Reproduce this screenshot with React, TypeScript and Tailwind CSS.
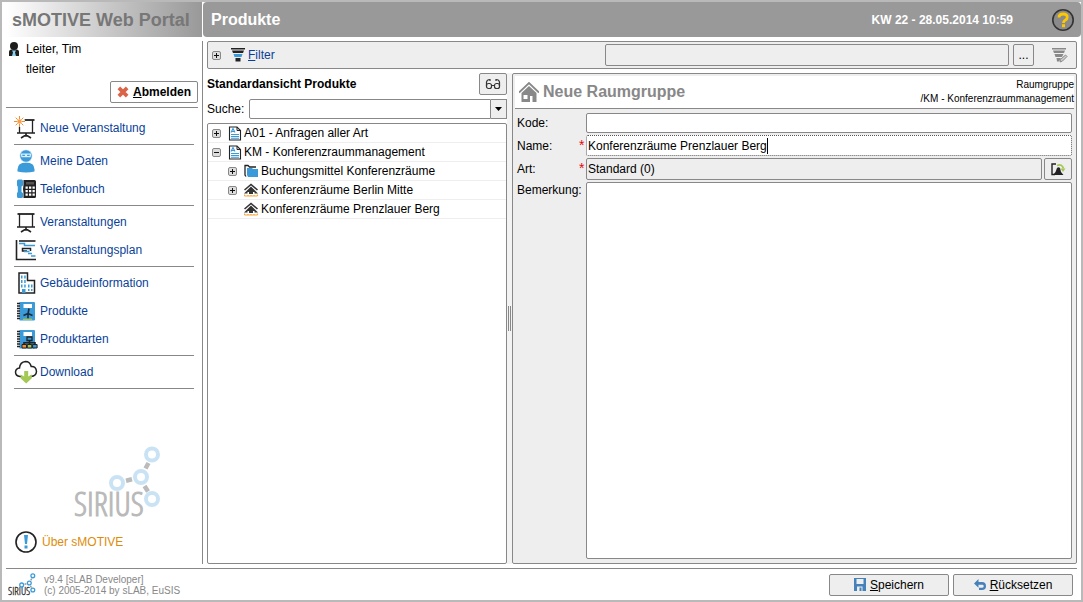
import React from 'react';

type IconProps = { className?: string };

const UserIcon = ({ className }: IconProps) => (
    <svg className={className} width="12" height="14" viewBox="0 0 12 14" aria-hidden="true">
        <circle cx="6" cy="4" r="4" fill="#1d1d1b" />
        <path d="M1 14V10Q1 7.500 3.500 7.500h5Q11 7.500 11 10v4z" fill="#1d1d1b" />
        <path d="M4 8.500h4l-1 2L8 14H4l1-3.500z" fill="#8fd0f5" />
    </svg>
);

const CrossIcon = () => (
    <svg width="12" height="12" viewBox="0 0 13 12" aria-hidden="true">
        <path d="M2 1.500l9 9M11 1.500l-9 9" stroke="#dc6446" strokeWidth="4" />
    </svg>
);

const Board = () => (
    <>
        <path d="M5.500 4v13M18.500 4v13M3 17h18" fill="none" stroke="#222" strokeWidth="1.300" />
        <path d="M3.500 4h17" stroke="#222" strokeWidth="1.800" />
        <path d="M12 17v3M7 22l3.500-2.200h3L17 22" fill="none" stroke="#222" strokeWidth="1.700" />
    </>
);

const BoardIcon = () => (
    <svg width="24" height="24" viewBox="0 0 24 24" aria-hidden="true">
        <Board />
    </svg>
);

const NewEventIcon = () => (
    <svg width="24" height="24" viewBox="0 0 24 24" aria-hidden="true">
        <Board />
        <circle cx="5.500" cy="5.500" r="5.500" fill="#fff" />
        <circle cx="5.500" cy="5.500" r="2.200" fill="#f6a04d" />
        <path d="M5.500 0v3M5.500 8v3M0 5.500h3M8 5.500h3M1.700 1.700l2 2M7.300 7.300l2 2M9.300 1.700l-2 2M3.700 7.300l-2 2" stroke="#f08c32" strokeWidth="1" />
    </svg>
);

const PersonIcon = () => (
    <svg width="24" height="24" viewBox="0 0 24 24" aria-hidden="true">
        <path d="M3.500 22.500v-2q0-7 8.500-7t8.500 7v2q-8.500 2-17 0z" fill="#3b9ad8" />
        <circle cx="12" cy="7" r="6.200" fill="#3b9ad8" stroke="#fff" strokeWidth=".6" />
        <path d="M7.500 5.200h4v2.500h-3.600zM12.500 5.200h4l-.4 2.500h-3.600z" fill="#3b9ad8" stroke="#d8eefa" strokeWidth="1.200" />
    </svg>
);

const PhoneIcon = () => (
    <svg width="24" height="24" viewBox="0 0 24 24" aria-hidden="true">
        <path d="M3 4q0-1.500 1.500-1.500h3Q9 2.500 9 4v4q0 1-1.500 1.500v5.500Q9 15.500 9 16.500v3q0 1.500-1.500 1.500h-3Q3 21 3 19.500v-3q0-1 .8-1.500V9.500Q3 9 3 8z" fill="#3b9ad8" />
        <path d="M9.500 3h11q1.500 0 1.500 1.500v15q0 1.500-1.500 1.500h-11v-5q-1-4 0-8z" fill="#222" />
        <path d="M12 5h8v2.500h-8z" fill="#555" />
        <path d="M11.500 9.500h2.300v2.300h-2.300zM15 9.500h2.300v2.300H15zM18.500 9.500h2.300v2.300h-2.300zM11.500 13h2.300v2.300h-2.300zM15 13h2.300v2.300H15zM18.500 13h2.300v2.300h-2.300zM11.500 16.500h2.300v2.300h-2.300zM15 16.500h2.300v2.300H15zM18.500 16.500h2.300v2.300h-2.300z" fill="#fff" />
    </svg>
);

const PlanIcon = () => (
    <svg width="24" height="24" viewBox="0 0 24 24" aria-hidden="true">
        <path d="M2.500 2v19.500H22" fill="none" stroke="#222" strokeWidth="1.600" />
        <path d="M5 3h16.500" stroke="#222" strokeWidth="1.600" />
        <path d="M5 5.500h5.500v2H21M14 15.500h4M17 18h4.500" fill="none" stroke="#3b9ad8" strokeWidth="1.500" />
        <path d="M16.500 13v-2.500h-8V13H13" fill="none" stroke="#222" strokeWidth="1.500" />
        <path d="M10 13.500h5.500" stroke="#3b9ad8" strokeWidth="1.500" />
    </svg>
);

const BuildingIcon = () => (
    <svg width="24" height="24" viewBox="0 0 24 24" aria-hidden="true">
        <path d="M5 22V2h8.500v7.500h7V22z" fill="#fff" stroke="#222" strokeWidth="1.500" />
        <path d="M7 4.500h1.500v3H7zM10.200 4.500h1.500v3h-1.500zM7 9h1.500v3H7zM10.200 9h1.500v3h-1.500zM7 13.500h1.500v3H7zM10.200 13.500h1.500v3h-1.500zM14 13.500h1.500v3H14zM17 13.500h1.500v3H17zM14 18h1.500v2H14zM17 18h1.500v2H17zM8 18h3.500v4H8z" fill="#3b9ad8" />
    </svg>
);

const Notebook = () => (
    <>
        <path d="M5.500 3h14.500q1 0 1 1v16.500q0 1-1 1H5.500z" fill="#3b9ad8" />
        <path d="M9.500 5h8.500v4H9.500z" fill="#fff" />
        <path d="M3 4.500h3M3 7h3M3 9.500h3M3 12h3M3 14.500h3M3 17h3M3 19.500h3" stroke="#222" strokeWidth="1.300" />
    </>
);

const ProductIcon = () => (
    <svg width="24" height="24" viewBox="0 0 24 24" aria-hidden="true">
        <Notebook />
        <path d="M15 9.500L14 15M14 14.500l4.500 2M14 14.500L9.500 16.500M14 14.500v5" stroke="#1c2c3a" strokeWidth="1.600" />
        <path d="M9 20.300h9" stroke="#a3c853" strokeWidth="1.300" />
    </svg>
);

const ProductTypeIcon = () => (
    <svg width="24" height="24" viewBox="0 0 24 24" aria-hidden="true">
        <Notebook />
        <path d="M15.500 13v4M10 18v-2.200h11V18" fill="none" stroke="#222" strokeWidth="1.600" />
        <path d="M13 10h5v3.500h-5z" fill="#3b9ad8" stroke="#222" strokeWidth="1.300" />
        <path d="M8 17.500h4.500v3.500H8z" fill="#f08c32" stroke="#222" strokeWidth="1" />
        <path d="M13.300 17.500h4.500v3.500h-4.500z" fill="#a3c853" stroke="#222" strokeWidth="1" />
        <path d="M18.600 17.500h4.500v3.500h-4.500z" fill="#3b9ad8" stroke="#222" strokeWidth="1" />
    </svg>
);

const CloudIcon = () => (
    <svg width="24" height="24" viewBox="0 0 24 24" aria-hidden="true">
        <path d="M8 16.500H6Q1.500 16 1.500 12 1.800 8.500 5.500 8 6 2 11.500 1.500 16 1.500 17.200 6.500 22 6 22.500 11.500 22.200 16 17 16.500h-1" fill="none" stroke="#222" strokeWidth="1.500" />
        <path d="M10.200 11h4v5.500l3.600-2v3.700L12.200 23.500l-5.600-5.300v-3.700l3.600 2z" fill="#a3c853" />
    </svg>
);

const InfoIcon = () => (
    <svg width="24" height="24" viewBox="0 0 24 24" aria-hidden="true">
        <circle cx="12" cy="12" r="10" fill="#fff" stroke="#222" strokeWidth="1.600" />
        <path d="M10 5h4l-1 9h-2zM10.500 15.500h3v3h-3z" fill="#3b9ad8" />
    </svg>
);

const HelpIcon = () => (
    <svg width="24" height="24" viewBox="0 0 24 24" aria-hidden="true">
        <circle cx="12" cy="12" r="10.200" fill="#8a8a8a" stroke="#333" strokeWidth="1.600" />
        <path d="M8 9.500Q8 6 12.200 6t4 3.500q0 1.700-2.100 2.800-1.600.9-1.600 2.700" fill="none" stroke="#fdc800" strokeWidth="2.800" />
        <path d="M11 16.200h3v3h-3z" fill="#fdc800" />
    </svg>
);

const FunnelIcon = () => (
    <svg width="14" height="16" viewBox="0 0 14 16" aria-hidden="true">
        <path d="M0 1h14v1.500H0zM1 3.500h12l-1 2.500H2z" fill="#222" />
        <path d="M2.500 7h9l-1 3h-7z" fill="#3b9ad8" />
        <path d="M4.500 11h5v3.500h-5z" fill="#222" />
    </svg>
);

const FunnelEditIcon = () => (
    <svg width="16" height="16" viewBox="0 0 16 16" aria-hidden="true">
        <path d="M0 1h14v1.500H0zM1 3.500h12l-1 2.500H2zM2.500 7h9l-1.500 3H3.500zM4.500 11H9l-2 3.500H5z" fill="#888" />
        <path d="M8 15l.5-2.500L13.500 8l1.500 1.500L10.500 14z" fill="#ccc" stroke="#888" />
    </svg>
);

const GlassesIcon = () => (
    <svg width="16" height="12" viewBox="0 0 16 12" aria-hidden="true">
        <g fill="none" stroke="#333" strokeWidth="1.200">
            <rect x="1.500" y="5.500" width="5" height="5" rx="2" />
            <rect x="9.500" y="5.500" width="5" height="5" rx="2" />
            <path d="M6.500 7.500h3M1.500 8V4Q2 1.500 5 1.500V3M14.500 8V4Q14 1.500 11 1.500V3" />
        </g>
    </svg>
);

const DocIcon = () => (
    <svg width="14" height="15" viewBox="0 0 14 15" aria-hidden="true">
        <path d="M1.500 1h7.500l3.500 3.500v9.500h-11z" fill="#fff" stroke="#222" strokeWidth="1.100" />
        <path d="M9 1v3.500h3.500" fill="none" stroke="#222" />
        <path d="M3 6.500l2-4 2 4M3.500 5.500h3M3 8.500h8M3 10.500h8M3 12.300h8" fill="none" stroke="#3b9ad8" strokeWidth="1.100" />
    </svg>
);

const FolderIcon = () => (
    <svg width="15" height="14" viewBox="0 0 15 14" aria-hidden="true">
        <path d="M2 12.500L1 11V1.500h3L5.500 3H12" fill="none" stroke="#222" strokeWidth="1.300" />
        <path d="M3 4h5l1 1h5v8H4L3 11z" fill="#3b9ad8" />
    </svg>
);

const HutIcon = () => (
    <svg width="15" height="14" viewBox="0 0 15 14" aria-hidden="true">
        <path d="M.5 7L7 1.500 13.500 7" fill="none" stroke="#333" strokeWidth="1.600" />
        <path d="M0 10.500L7 3.500l7 7h-3.500V9H9v2H5V9H3.500v1.500z" fill="#333" />
        <path d="M.5 13v-1.500M4 13v-1M7 13v-1M10 13v-1M13.500 13v-1.500M.5 13h13" stroke="#f5a63c" strokeWidth="1.200" />
    </svg>
);

const HouseIcon = () => (
    <svg width="20" height="21" viewBox="0 0 20 21" aria-hidden="true">
        <path d="M0 10.500L10 1l10 9.500" fill="none" stroke="#888" strokeWidth="1.800" />
        <path d="M2.500 11L10 4l7.500 7v9h-4v-6H11v6H2.500z" fill="#888" />
        <path d="M4.500 13h4v4h-4z" fill="#fff" />
    </svg>
);

const PickIcon = () => (
    <svg width="15" height="13" viewBox="0 0 15 13" aria-hidden="true">
        <path d="M5 1H1v10.500h3" fill="none" stroke="#222" strokeWidth="1.400" />
        <path d="M2 12l2.500-3L6 5q1.500-1.500 3 0l1 4 2.500 3z" fill="#222" />
        <path d="M6 2.500q5-2 6.500 3" fill="none" stroke="#a3c853" strokeWidth="1.800" />
        <path d="M9.500 5.500h5L12 9z" fill="#a3c853" />
    </svg>
);

const SaveIcon = () => (
    <svg width="12" height="13" viewBox="0 0 12 13" aria-hidden="true">
        <path d="M0 0h12v13H0z" fill="#4681ba" />
        <path d="M2.500 1h7v5h-7zM3 8.500h5.500V13H3z" fill="#eee" />
        <path d="M5.500 9.500h2V13h-2z" fill="#4681ba" />
    </svg>
);

const UndoIcon = () => (
    <svg width="12" height="12" viewBox="0 0 12 12" aria-hidden="true">
        <path d="M0 4.500L4.500 0v3H8q4 0 4 4.200Q12 11 8 11H5V8.800h3q1.700 0 1.700-1.600T8 5.800H4.500v3z" fill="#4681ba" />
    </svg>
);

const SiriusLogo = ({ className, ring, bar, ink }: { className: string; ring: string; bar: string; ink: string }) => (
    <svg className={className} viewBox="0 0 88 84" role="img" aria-label="Sirius">
        <text x="0" y="70" fontSize="33" fontWeight="300" fill={ink} stroke={ink} strokeWidth="1" className="font-['Open_Sans_Condensed_Light','Open_Sans_Light_Condensed','Liberation_Sans_Narrow',sans-serif]">
            SIRIUS
        </text>
        <g fill="none" stroke={ring} strokeWidth="4">
            <circle cx="78" cy="8.500" r="6" />
            <circle cx="67" cy="31" r="6" />
            <circle cx="43" cy="37" r="6" />
            <circle cx="78" cy="53" r="6" />
        </g>
        <path d="M74.500 17l-3 5.500M52 34.800l6-1.500M70.500 40l3.500 5.500" stroke={bar} strokeWidth="4.500" />
    </svg>
);

const navGroups = [
    [{ label: 'Neue Veranstaltung', icon: NewEventIcon }],
    [
        { label: 'Meine Daten', icon: PersonIcon },
        { label: 'Telefonbuch', icon: PhoneIcon },
    ],
    [
        { label: 'Veranstaltungen', icon: BoardIcon },
        { label: 'Veranstaltungsplan', icon: PlanIcon },
    ],
    [
        { label: 'Gebäudeinformation', icon: BuildingIcon },
        { label: 'Produkte', icon: ProductIcon },
        { label: 'Produktarten', icon: ProductTypeIcon },
    ],
    [{ label: 'Download', icon: CloudIcon }],
];

const treeRows = [
    { label: 'A01 - Anfragen aller Art', icon: DocIcon, toggle: 'plus', nested: false },
    { label: 'KM - Konferenzraummanagement', icon: DocIcon, toggle: 'minus', nested: false },
    { label: 'Buchungsmittel Konferenzräume', icon: FolderIcon, toggle: 'plus', nested: true },
    { label: 'Konferenzräume Berlin Mitte', icon: HutIcon, toggle: 'plus', nested: true },
    { label: 'Konferenzräume Prenzlauer Berg', icon: HutIcon, toggle: '', nested: true },
];

function Toggle({ kind, label }: { kind: string; label: string }) {
    return (
        <button type="button" aria-label={label} className="flex size-[9px] shrink-0 items-center justify-center rounded-xs border border-[#888] bg-[#ddd]">
            <svg width="5" height="5" viewBox="0 0 5 5" aria-hidden="true">
                <path d={kind === 'plus' ? 'M0 2.500h5M2.500 0v5' : 'M0 2.500h5'} stroke="#111" />
            </svg>
        </button>
    );
}

function Sidebar() {
    return (
        <aside className="flex w-[197px] shrink-0 flex-col border-r border-[#888] pb-2.5">
            <div className="mr-1 border-b border-[#888] pb-1">
                <div className="flex gap-1.5 pl-0.5">
                    <UserIcon className="mt-px shrink-0" />
                    <div className="-mt-0.5 leading-5">
                        <div>Leiter, Tim</div>
                        <div>tleiter</div>
                    </div>
                </div>
                <div className="mt-0.5 flex justify-end">
                    <button type="button" className="flex h-[22px] items-center gap-1 rounded-xs border border-[#888] px-1.5 font-bold">
                        <CrossIcon />
                        <span><u>A</u>bmelden</span>
                    </button>
                </div>
            </div>
            <nav className="mx-2 mt-1.5">
                {navGroups.map((group, i) => (
                    <ul key={i} className="mb-0.5 border-b border-[#888] pb-0.5">
                        {group.map(({ label, icon: Icon }) => (
                            <li key={label}>
                                <a href="#" className="flex h-7 items-center gap-0.5 text-[#0a3f99]">
                                    <Icon />
                                    {label}
                                </a>
                            </li>
                        ))}
                    </ul>
                ))}
            </nav>
            <div className="mt-auto pl-[68px]">
                <SiriusLogo className="h-[84px] w-[88px]" ring="#c9e3f5" bar="#bbb" ink="#b9b9b9" />
            </div>
            <a href="#" className="mx-2 flex items-center gap-1 text-[#dd8c0a]">
                <InfoIcon />
                Über sMOTIVE
            </a>
        </aside>
    );
}

function FilterBar() {
    return (
        <div className="flex h-7 items-center rounded-xs border border-[#888] bg-[#eee] px-1">
            <Toggle kind="plus" label="Filter aufklappen" />
            <a href="#" className="ml-2.5 flex items-center gap-[3px] text-[#0a3f99]">
                <FunnelIcon />
                <span><u>F</u>ilter</span>
            </a>
            <input aria-label="Filter" readOnly className="ml-auto h-[22px] w-[47%] rounded-xs border border-[#888] bg-[#eee] px-1" />
            <button type="button" className="ml-1 h-[22px] w-[21px] rounded-xs border border-[#888]">...</button>
            <button type="button" aria-label="Filter bearbeiten" className="ml-[18px] mr-1">
                <FunnelEditIcon />
            </button>
        </div>
    );
}

function TreePanel() {
    return (
        <section className="flex w-[300px] shrink-0 flex-col">
            <div className="flex items-center justify-between">
                <h2 className="font-bold">Standardansicht Produkte</h2>
                <button type="button" aria-label="Ansicht" className="flex h-[22px] w-7 items-center justify-center rounded-xs border border-[#888] bg-[#eee]">
                    <GlassesIcon />
                </button>
            </div>
            <div className="mt-1 flex h-5 items-center">
                <label htmlFor="suche" className="w-[42px]">Suche:</label>
                <input id="suche" className="h-5 min-w-0 flex-1 rounded-l-xs border border-[#888] bg-white px-1" />
                <button type="button" aria-label="Suchverlauf" className="flex h-5 w-4 items-center justify-center border border-l-0 border-[#888] bg-[#eee]">
                    <svg width="7" height="4" viewBox="0 0 7 4" aria-hidden="true"><path d="M0 0h7L3.500 4z" /></svg>
                </button>
            </div>
            <ul className="mt-1 flex-1 rounded-xs border border-[#888] bg-white">
                {treeRows.map(({ label, icon: Icon, toggle, nested }) => (
                    <li key={label} className={`flex h-[19px] items-center border-b border-[#eee] ${nested ? 'pl-5' : 'pl-1'}`}>
                        {toggle ? <Toggle kind={toggle} label={label} /> : <span className="w-[9px]" />}
                        <span className="mx-[7px] flex items-center gap-[2px]">
                            <Icon />
                            {label}
                        </span>
                    </li>
                ))}
            </ul>
        </section>
    );
}

function FormPanel() {
    return (
        <form className="flex min-w-0 flex-1 flex-col rounded-xs border border-[#888] bg-[#eee] p-0.5 pb-1">
            <header className="flex h-[33px] shrink-0 items-center justify-between border-b border-[#888] bg-white pl-1">
                <h2 className="flex items-center gap-1 text-[16px] font-bold text-[#888]">
                    <HouseIcon />
                    Neue Raumgruppe
                </h2>
                <div className="text-right text-[10px] leading-[14px]">
                    <div>Raumgruppe</div>
                    <div>/KM - Konferenzraummanagement</div>
                </div>
            </header>
            <div className="mt-1 grid flex-1 grid-cols-[62px_7px_1fr] grid-rows-[20px_21px_22px_1fr] gap-y-0.5 pl-0.5 pr-0.5">
                <label htmlFor="kode" className="col-span-2 self-center">Kode:</label>
                <input id="kode" className="rounded-xs border border-[#888] bg-white px-0.5" />

                <label htmlFor="name" className="self-center">Name:</label>
                <span className="text-[14px] leading-5 text-red-600">*</span>
                <div className="flex items-center rounded-xs border border-dotted border-[#555] bg-white pl-px">
                    <input id="name" defaultValue="Konferenzräume Prenzlauer Berg" className="field-sizing-content outline-none" />
                    <span className="h-4 w-px bg-black" />
                </div>

                <label htmlFor="art" className="self-center">Art:</label>
                <span className="text-[14px] leading-5 text-red-600">*</span>
                <div className="flex gap-0.5">
                    <input id="art" readOnly defaultValue="Standard (0)" className="min-w-0 flex-1 rounded-xs border border-[#888] bg-[#eee] px-px" />
                    <button type="button" aria-label="Art auswählen" className="flex w-7 items-center justify-center rounded-xs border border-[#888]">
                        <PickIcon />
                    </button>
                </div>

                <label htmlFor="bemerkung" className="col-span-2">Bemerkung:</label>
                <textarea id="bemerkung" className="resize-none rounded-xs border border-[#888] bg-white px-0.5" />
            </div>
        </form>
    );
}

function Footer() {
    return (
        <footer className="mr-1 mt-1 flex h-8 items-center border-t border-[#888] pr-1">
            <SiriusLogo className="ml-0.5 mt-1 h-[27px] w-7" ring="#3b9ad8" bar="#999" ink="#333" />
            <div className="ml-2 text-[10px] leading-[11px] text-[#888]">
                <div>v9.4 [sLAB Developer]</div>
                <div>(c) 2005-2014 by sLAB, EuSIS</div>
            </div>
            <div className="ml-auto flex gap-1">
                <button type="button" className="flex h-[22px] w-[120px] items-center justify-center gap-1 rounded-xs border border-[#888] bg-[#eee]">
                    <SaveIcon />
                    <span><u>S</u>peichern</span>
                </button>
                <button type="button" className="flex h-[22px] w-[120px] items-center justify-center gap-1 rounded-xs border border-[#888] bg-[#eee]">
                    <UndoIcon />
                    <span><u>R</u>ücksetzen</span>
                </button>
            </div>
        </footer>
    );
}

export default function App() {
    return (
        <div className="flex min-h-screen flex-col border-2 border-[#b9b9b9] bg-white pl-1 font-['Liberation_Sans',Arial,sans-serif] text-[12px] leading-4 text-black">
            {/* Title bar */}
            <header className="flex h-[35px] gap-px font-bold">
                <div className="flex w-[196px] shrink-0 items-center bg-linear-to-r from-white to-[#999] pl-1.5 text-[18px] text-[#777]">
                    sMOTIVE Web Portal
                </div>
                <div className="flex flex-1 items-center rounded-sm bg-[#999] pl-2 pr-1.5 text-white">
                    <h1 className="text-[16px]">Produkte</h1>
                    <span className="ml-auto">KW 22 - 28.05.2014 10:59</span>
                    <button type="button" aria-label="Hilfe" className="ml-[38px]">
                        <HelpIcon />
                    </button>
                </div>
            </header>

            <div className="mt-1 flex flex-1">
                <Sidebar />
                <main className="flex min-w-0 flex-1 flex-col gap-1 pl-1 pr-1">
                    <FilterBar />
                    <div className="flex flex-1">
                        <TreePanel />
                        {/* Splitter */}
                        <div className="flex w-[5px] shrink-0 items-center justify-center bg-[#f3f3f3]">
                            <span className="h-[25px] w-[3px] border-x border-[#888]" />
                        </div>
                        <FormPanel />
                    </div>
                </main>
            </div>

            <Footer />
        </div>
    );
}
